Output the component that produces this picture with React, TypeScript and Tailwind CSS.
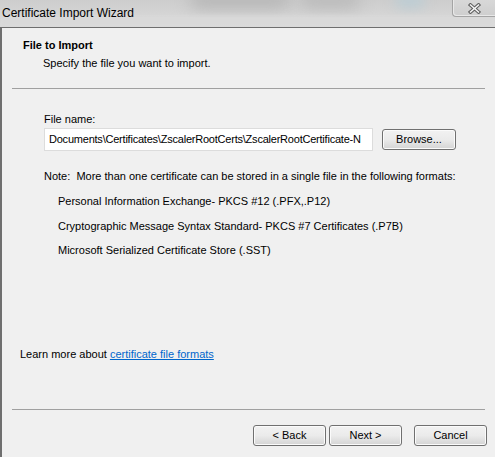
import React from 'react'

const formats = [
  'Personal Information Exchange- PKCS #12 (.PFX,.P12)',
  'Cryptographic Message Syntax Standard- PKCS #7 Certificates (.P7B)',
  'Microsoft Serialized Certificate Store (.SST)',
]

function WinButton({ label, className = '' }: { label: string; className?: string }) {
  return (
    <button
      className={`h-[21px] rounded-[3px] border border-[#707070] bg-gradient-to-b from-[#f2f2f2] via-[#ebebeb] to-[#d4d4d4] text-[11px] leading-none text-black shadow-[inset_0_0_0_1px_#fbfbfb] ${className}`}
    >
      {label}
    </button>
  )
}

export default function App() {
  return (
    <div
      className="relative flex h-[457px] w-[495px] flex-col overflow-hidden bg-[#f0f0f0] text-[11px] text-black"
      style={{ fontFamily: '"Liberation Sans", Arial, sans-serif' }}
    >
      {/* title bar */}
      <div className="relative h-[28px] shrink-0 overflow-hidden border-b border-[#6e6e6e] bg-gradient-to-b from-[#cdcdcd] to-[#dcdcdc]">
        <div className="absolute left-[190px] top-[-8px] h-[16px] w-[100px] rounded-full bg-[#b4b4b4] blur-[8px]" />
        <div className="absolute left-[300px] top-[-8px] h-[16px] w-[60px] rounded-full bg-[#b8b8b8] blur-[8px]" />
        <div className="absolute left-[395px] top-[-6px] h-[14px] w-[30px] rounded-full bg-[#bccdd4] blur-[6px]" />
        <div className="absolute left-0 top-[16px] h-[11px] w-full bg-[#d9d9d9] blur-[2px]" />
        <span className="absolute left-[2px] top-[6px] text-[12px] leading-[14px] text-black">Certificate Import Wizard</span>
        <div className="absolute right-0 top-0 flex h-[17px] w-[43px] items-center justify-center rounded-bl-[4px] border-b border-l border-[#a4a4a4] bg-gradient-to-b from-[#d8d8d8] to-[#cecece] shadow-[inset_1px_-1px_0_#e8e8e8]">
          <svg width="13" height="11" viewBox="0 0 13 11">
            <path d="M2.5 2 L10.5 9 M10.5 2 L2.5 9" stroke="#606060" strokeWidth="3.6" strokeLinecap="square" />
            <path d="M2.5 2 L10.5 9 M10.5 2 L2.5 9" stroke="#f6f6f6" strokeWidth="1.5" strokeLinecap="square" />
          </svg>
        </div>
      </div>

      {/* body */}
      <div className="flex flex-1 flex-col border-l-2 border-[#6f6f6f]">
        <div className="h-[60px] shrink-0 pl-[21px] pt-[9px]">
          <div className="font-bold leading-[16px]">File to Import</div>
          <div className="mt-[2px] pl-[20px] leading-[16px]">Specify the file you want to import.</div>
        </div>
        <div className="mx-[10px] h-px bg-[#a0a0a0]" />

        <div className="flex flex-1 flex-col pl-[42px] pt-[22px]">
          <div className="leading-[16px]">File name:</div>
          <div className="mt-[1px] flex items-center">
            <div className="flex h-[23px] w-[329px] items-center overflow-hidden whitespace-nowrap border border-[#dcdcdc] bg-white pl-[4px]">
              <span className="tracking-[-0.22px]">Documents\Certificates\ZscalerRootCerts\ZscalerRootCertificate-N</span>
            </div>
            <WinButton label="Browse..." className="ml-[9px] w-[74px]" />
          </div>

          <div className="mt-[17px] leading-[16px]">
            Note:&nbsp; More than one certificate can be stored in a single file in the following formats:
          </div>
          <div className="mt-[9px] flex flex-col gap-[8.5px] pl-[14px]">
            {formats.map(f => (
              <div key={f} className="leading-[16px]">{f}</div>
            ))}
          </div>
        </div>

        <div className="pb-[47px] pl-[18px] leading-[16px]">
          Learn more about{' '}
          <a className="text-[#0066cc] underline">certificate file formats</a>
        </div>

        <div className="mx-[10px] h-px bg-[#a0a0a0]" />
        <div className="flex h-[47px] shrink-0 items-start justify-end pr-[8px] pt-[15px]">
          <WinButton label="< Back" className="w-[73px]" />
          <WinButton label="Next >" className="ml-[3px] w-[73px]" />
          <WinButton label="Cancel" className="ml-[12px] w-[73px]" />
        </div>
      </div>
    </div>
  )
}
